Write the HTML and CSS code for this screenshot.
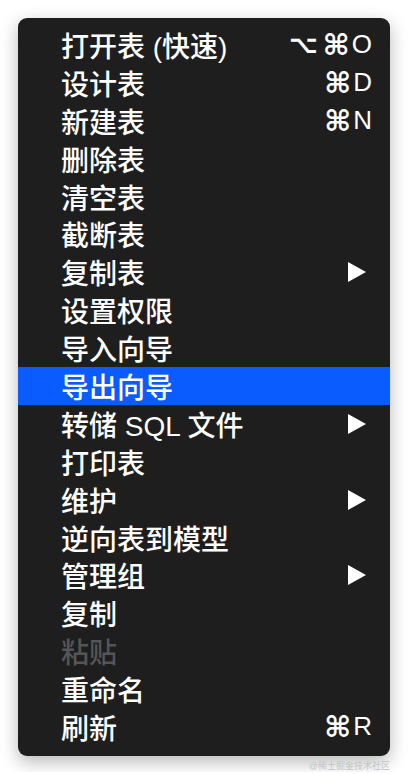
FILE: index.html
```
<!DOCTYPE html>
<html>

<head>
    <title>表菜单</title>
    <link rel="stylesheet" href="styles.css">
</head>

<body>
    <div class="menu">
        <div class="item"><span class="label">打开表 (快速)</span><span class="key"><span class="opt">⌥</span><span class="sym">⌘</span>O</span></div>
        <div class="item"><span class="label">设计表</span><span class="key"><span class="sym">⌘</span>D</span></div>
        <div class="item"><span class="label">新建表</span><span class="key"><span class="sym">⌘</span>N</span></div>
        <div class="item"><span class="label">删除表</span></div>
        <div class="item"><span class="label">清空表</span></div>
        <div class="item"><span class="label">截断表</span></div>
        <div class="item"><span class="label">复制表</span><svg class="arrow" viewBox="0 0 18 20"><polygon points="0,0 18,10 0,20" /></svg></div>
        <div class="item"><span class="label">设置权限</span></div>
        <div class="item"><span class="label">导入向导</span></div>
        <div class="item active"><span class="label">导出向导</span></div>
        <div class="item"><span class="label">转储 SQL 文件</span><svg class="arrow" viewBox="0 0 18 20"><polygon points="0,0 18,10 0,20" /></svg></div>
        <div class="item"><span class="label">打印表</span></div>
        <div class="item"><span class="label">维护</span><svg class="arrow" viewBox="0 0 18 20"><polygon points="0,0 18,10 0,20" /></svg></div>
        <div class="item"><span class="label">逆向表到模型</span></div>
        <div class="item"><span class="label">管理组</span><svg class="arrow" viewBox="0 0 18 20"><polygon points="0,0 18,10 0,20" /></svg></div>
        <div class="item"><span class="label">复制</span></div>
        <div class="item disabled"><span class="label">粘贴</span></div>
        <div class="item"><span class="label">重命名</span></div>
        <div class="item"><span class="label">刷新</span><span class="key"><span class="sym">⌘</span>R</span></div>
    </div>

    <div class="watermark">@稀土掘金技术社区</div>
</body>

</html>
```

FILE: styles.css
```
body {
    margin: 0;
    padding: 0;
    background-color: #ffffff;
    font-family: "Liberation Sans", "Noto Sans CJK SC", sans-serif;
}

.menu {
    width: 372px;
    height: 738px;
    box-sizing: border-box;
    margin: 18px 0 0 18px;
    padding: 8px 0 10px 0;
    background-color: #1e1e1e;
    border-radius: 9px;
    box-shadow: 0 6px 18px rgba(0, 0, 0, 0.28);
}

.item {
    display: flex;
    align-items: center;
    height: 37.9px;
    padding: 0 18px 0 43px;
    color: #ffffff;
    font-size: 28px;
    font-weight: 500;
}

.label {
    flex: 1;
    white-space: nowrap;
}

.key {
    display: flex;
    align-items: center;
    font-size: 26px;
    font-weight: 400;
}

.sym,
.opt {
    font-family: "DejaVu Sans", sans-serif;
    font-weight: 700;
    margin-right: 2px;
}

.sym {
    font-size: 29px;
}

.opt {
    font-size: 25px;
    margin-right: 5px;
}

.arrow {
    width: 18px;
    height: 20px;
    margin-right: 6px;
    fill: #ffffff;
}

.active {
    background-color: #0b5cff;
}

.disabled {
    color: #555555;
}

.watermark {
    width: 390px;
    margin-top: 3px;
    text-align: right;
    font-size: 9px;
    color: #c4c4c4;
}
```
